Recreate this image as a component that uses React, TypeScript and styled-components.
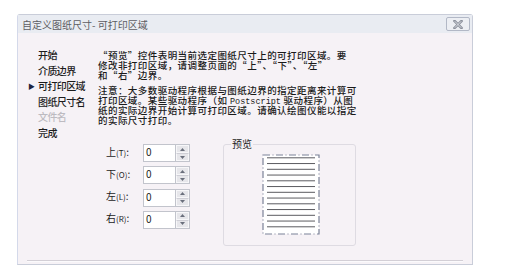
import React from "react";
import styled, { createGlobalStyle } from "styled-components";

const GlobalStyle = createGlobalStyle`
  html, body {
    margin: 0;
    padding: 0;
    background: #ffffff;
  }
  body {
    font-family: "Noto Sans CJK SC", "Noto Sans", sans-serif;
    color: #1c1c1c;
  }
`;

const Page = styled.div`
  width: 510px;
  height: 277px;
  box-sizing: border-box;
  padding: 14px 0 0 17px;
`;

const Window = styled.div`
  width: 456px;
  height: 251px;
  box-sizing: border-box;
  display: flex;
  flex-direction: column;
  background: #f6f2f6;
  border: 1px solid #c9cdd9;
  border-left-color: #d4d9ea;
  border-radius: 3px 3px 0 0;
`;

const TitleBar = styled.div`
  height: 18px;
  display: flex;
  align-items: center;
  justify-content: space-between;
  padding: 0 2px 0 4px;
  background: #e9ecf2;
`;

const Title = styled.span`
  font-size: 10px;
  color: #5d5d62;
`;

const CloseButton = styled.button`
  width: 24px;
  height: 14px;
  padding: 0;
  display: flex;
  align-items: center;
  justify-content: center;
  background: #eceef3;
  border: 1px solid #b2b8c6;
  border-radius: 2px;
`;

const Body = styled.div`
  flex: 1;
  display: flex;
`;

const Nav = styled.ul`
  width: 80px;
  margin: 0;
  padding: 14px 0 0 10px;
  box-sizing: border-box;
  list-style: none;
`;

const NavItem = styled.li<{ disabled?: boolean }>`
  display: flex;
  height: 15.5px;
  align-items: center;
  font-size: 10px;
  letter-spacing: -0.6px;
  font-weight: 500;
  color: ${({ disabled }) => (disabled ? "#bdbbc1" : "#1c1c1c")};
  white-space: nowrap;
`;

const Marker = styled.span`
  width: 10px;
  font-size: 7px;
  color: #1d2540;
`;

const Content = styled.div`
  flex: 1;
  padding-top: 17px;
`;

const Para = styled.p<{ gap?: number }>`
  margin: ${({ gap }) => gap ?? 0}px 0 0 0;
  font-size: 9.5px;
  letter-spacing: 0.45px;
  line-height: 10px;
  font-weight: 500;
  color: #1a1a1a;
  white-space: nowrap;
`;

const Mono = styled.span`
  font-family: "Liberation Mono", "DejaVu Sans Mono", monospace;
  font-size: 8.5px;
  letter-spacing: 0;
  line-height: 0;
`;

const Lower = styled.div`
  display: flex;
  margin-top: 14px;
`;

const Fields = styled.div`
  display: flex;
  flex-direction: column;
  gap: 4.3px;
  padding: 5px 0 0 8px;
  width: 92px;
  box-sizing: border-box;
`;

const FieldRow = styled.div`
  display: flex;
  align-items: center;
  height: 18px;
`;

const FieldLabel = styled.label`
  width: 37px;
  font-size: 10px;
  line-height: 12px;
  color: #1c1c1c;
  white-space: nowrap;
  margin-top: -3px;
`;

const Key = styled.span`
  font-size: 8px;
  line-height: 0;
`;

const NumberBox = styled.div`
  width: 32px;
  height: 18px;
  box-sizing: border-box;
  border: 1px solid #c2c4cc;
  border-right: none;
  background: #ffffff;
  font-size: 10px;
  padding: 1px 0 0 2px;
  line-height: 11px;
`;

const Spin = styled.div`
  width: 15px;
  height: 18px;
  box-sizing: border-box;
  display: flex;
  flex-direction: column;
  border: 1px solid #c2c4cc;
  background: #e6e6ea;
`;

const SpinHalf = styled.div<{ down?: boolean }>`
  flex: 1;
  display: flex;
  align-items: center;
  justify-content: center;
  border: 1px solid #f7f7f9;
  ${({ down }) => (down ? "border-top-color: #cfcfd6;" : "")}
`;

const GroupBox = styled.fieldset`
  width: 133px;
  margin: 0 0 0 33px;
  padding: 5px 0 10px 0;
  box-sizing: border-box;
  border: 1px solid #dedbe2;
  border-radius: 3px;
`;

const Legend = styled.legend`
  margin-left: 7px;
  padding: 0 1px;
  font-size: 10px;
  line-height: 10px;
  color: #1c1c1c;
`;

const PaperWrap = styled.div`
  display: flex;
  justify-content: center;
  padding-left: 2px;
`;

const Separator = styled.div`
  margin: 0 9px 2px 9px;
  border-top: 1px solid #d3cfd6;
  border-bottom: 1px solid #fbfafc;
`;

const navItems = [
  { label: "开始" },
  { label: "介质边界" },
  { label: "可打印区域", current: true },
  { label: "图纸尺寸名" },
  { label: "文件名", disabled: true },
  { label: "完成" },
];

const fields = [
  { name: "上", key: "T" },
  { name: "下", key: "O" },
  { name: "左", key: "L" },
  { name: "右", key: "R" },
];

function CloseIcon() {
  return (
    <svg width="10" height="9" viewBox="0 0 10 9">
      <path d="M1.5 1 L8.5 8 M8.5 1 L1.5 8" stroke="#8b909c" strokeWidth="2.6" strokeLinecap="square" />
      <path d="M1.8 1.3 L8.2 7.7 M8.2 1.3 L1.8 7.7" stroke="#e4e6ec" strokeWidth="0.9" />
    </svg>
  );
}

function Arrow({ down }: { down?: boolean }) {
  return (
    <svg width="5" height="3" viewBox="0 0 5 3">
      <path d={down ? "M0 0 H5 L2.5 3 Z" : "M0 3 H5 L2.5 0 Z"} fill="#6a6f7c" />
    </svg>
  );
}

function Paper() {
  const lines = Array.from({ length: 13 }, (_, i) => 3.8 + i * 5.75);
  return (
    <svg width="58" height="81" viewBox="0 0 58 81">
      <rect
        x="1"
        y="1"
        width="56"
        height="79"
        fill="#ffffff"
        stroke="#7b8197"
        strokeWidth="1.2"
        strokeDasharray="7 2.5 1 2.5"
      />
      {lines.map((y) => (
        <line key={y} x1="5" x2="53" y1={y} y2={y} stroke="#5b5b60" strokeWidth="1" />
      ))}
    </svg>
  );
}

export default function App() {
  return (
    <>
      <GlobalStyle />
      <Page>
        <Window>
          <TitleBar>
            <Title>自定义图纸尺寸- 可打印区域</Title>
            <CloseButton aria-label="关闭">
              <CloseIcon />
            </CloseButton>
          </TitleBar>
          <Body>
            <Nav>
              {navItems.map((item) => (
                <NavItem key={item.label} disabled={item.disabled}>
                  <Marker>{item.current ? "▶" : ""}</Marker>
                  {item.label}
                </NavItem>
              ))}
            </Nav>
            <Content>
              <Para>
                “预览”控件表明当前选定图纸尺寸上的可打印区域。要
                <br />
                修改非打印区域，请调整页面的“上”、“下”、“左”
                <br />
                和“右”边界。
              </Para>
              <Para gap={5}>
                注意：大多数驱动程序根据与图纸边界的指定距离来计算可
                <br />
                打印区域。某些驱动程序（如 <Mono>Postscript</Mono> 驱动程序）从图
                <br />
                纸的实际边界开始计算可打印区域。请确认绘图仪能以指定
                <br />
                的实际尺寸打印。
              </Para>
              <Lower>
                <Fields>
                  {fields.map((f) => (
                    <FieldRow key={f.key}>
                      <FieldLabel>
                        {f.name}
                        <Key>({f.key})</Key>:
                      </FieldLabel>
                      <NumberBox>0</NumberBox>
                      <Spin>
                        <SpinHalf>
                          <Arrow />
                        </SpinHalf>
                        <SpinHalf down>
                          <Arrow down />
                        </SpinHalf>
                      </Spin>
                    </FieldRow>
                  ))}
                </Fields>
                <GroupBox>
                  <Legend>预览</Legend>
                  <PaperWrap>
                    <Paper />
                  </PaperWrap>
                </GroupBox>
              </Lower>
            </Content>
          </Body>
          <Separator />
        </Window>
      </Page>
    </>
  );
}
